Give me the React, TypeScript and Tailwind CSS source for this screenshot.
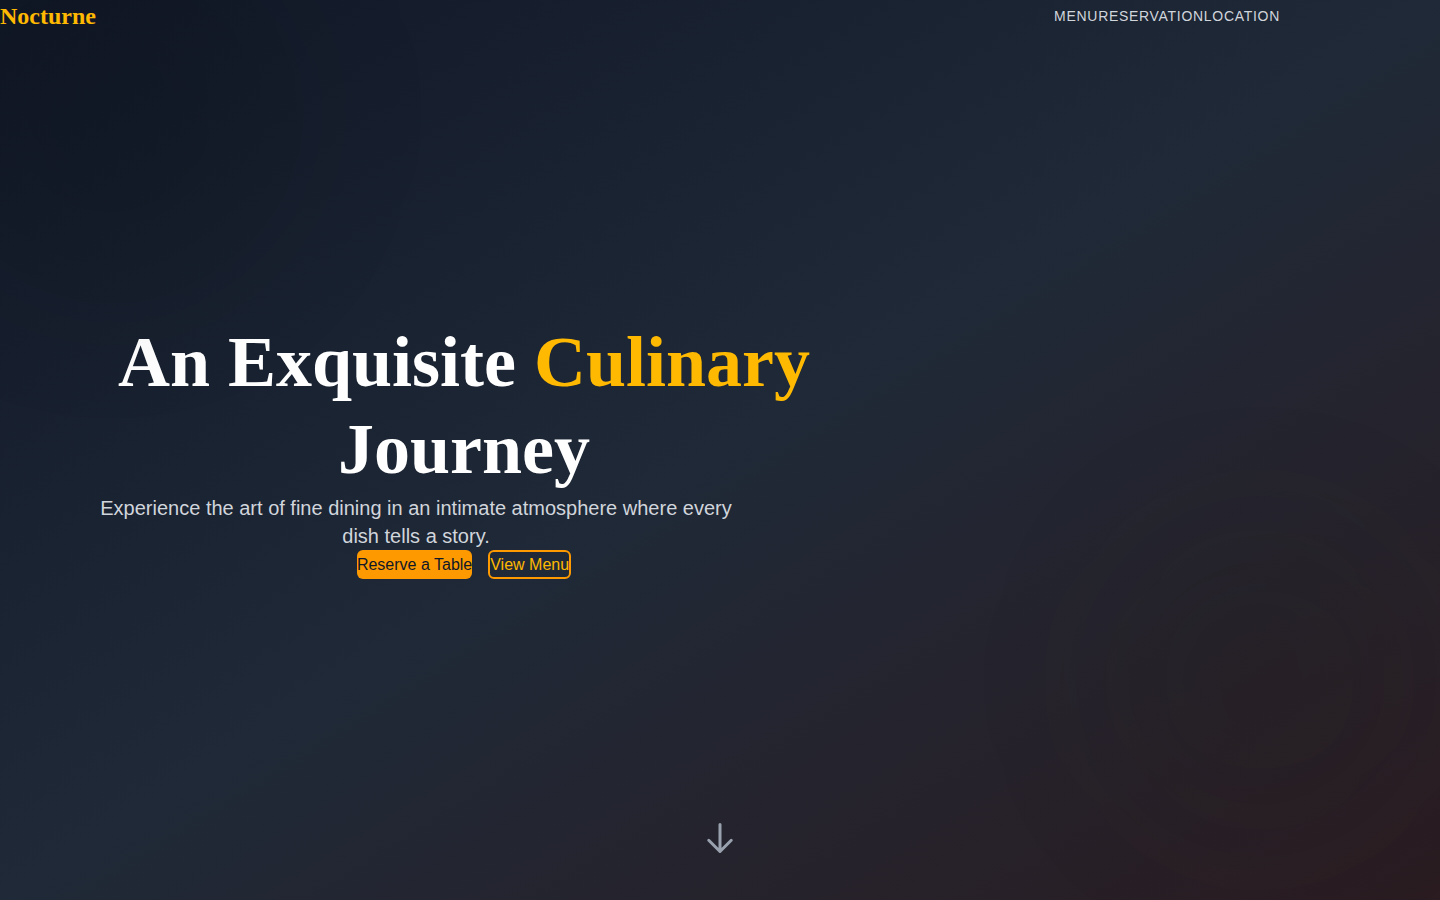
export default function App() {
  return (
    <div className="relative min-h-screen w-full overflow-hidden bg-gradient-to-br from-[#111827] via-[#1f2937] to-[#2a1c21] font-['Liberation_Sans',Arial,sans-serif]">
      {/* soft glows */}
      <div className="pointer-events-none absolute left-[1100px] top-[520px] h-80 w-80 rounded-full bg-stone-900/10 blur-3xl" />
      <div className="pointer-events-none absolute -left-20 -top-20 h-96 w-96 rounded-full bg-black/10 blur-3xl" />

      {/* Header */}
      <header className="absolute left-0 top-0 z-10 flex w-full max-w-7xl items-center justify-between">
        <a className="font-['Liberation_Serif',serif] text-2xl font-bold text-amber-400">
          Nocturne
        </a>
        <nav className="flex text-sm uppercase tracking-wider text-gray-300">
          <a>Menu</a>
          <a>Reservation</a>
          <a>Location</a>
        </nav>
      </header>

      {/* Hero */}
      <section className="flex h-screen items-center pb-0.5 pl-20">
        <div className="w-full max-w-3xl text-center">
          <h1 className="mb-0.5 font-['Liberation_Serif',serif] text-7xl font-bold leading-[1.2] text-white">
            An Exquisite <span className="text-amber-400">Culinary</span>{" "}
            Journey
          </h1>
          <p className="max-w-2xl text-xl text-gray-300">
            Experience the art of fine dining in an intimate atmosphere where
            every dish tells a story.
          </p>
          <div className="flex justify-center gap-4">
            <button className="rounded-md bg-amber-500 leading-[25px] text-gray-900">
              Reserve a Table
            </button>
            <button className="rounded-md border-2 border-amber-500 leading-[25px] text-amber-400">
              View Menu
            </button>
          </div>
        </div>
      </section>

      {/* Scroll indicator */}
      <div className="absolute bottom-11 left-1/2 -translate-x-1/2 text-gray-400">
        <svg
          className="h-9 w-9"
          viewBox="0 0 24 24"
          fill="none"
          stroke="currentColor"
          strokeWidth={2}
        >
          <path
            strokeLinecap="round"
            strokeLinejoin="round"
            d="M19.5 13.5 12 21m0 0-7.5-7.5M12 21V3"
          />
        </svg>
      </div>
    </div>
  );
}
